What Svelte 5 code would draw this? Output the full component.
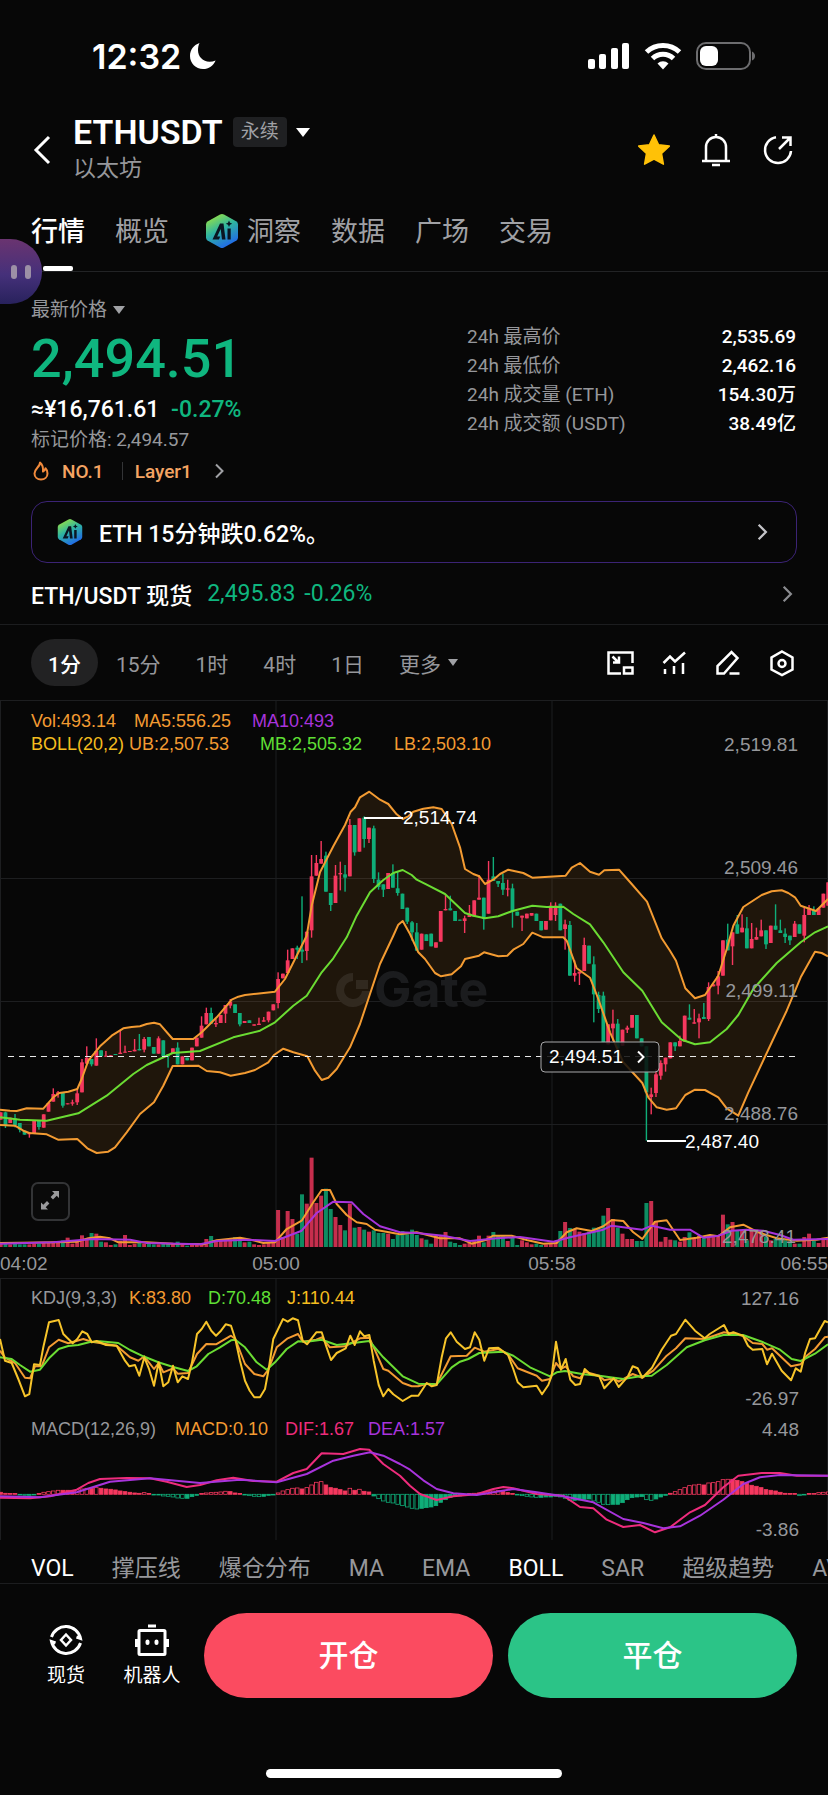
<script lang="ts">
	type Candle = { x: number; up: boolean; top: number; bottom: number; high: number; low: number; vol: number };

	const tabs = ['行情', '概览', '洞察', '数据', '广场', '交易'];
	const frames = ['1分', '15分', '1时', '4时', '1日'];
	const indicators = ['VOL', '撑压线', '爆仓分布', 'MA', 'EMA', 'BOLL', 'SAR', '超级趋势', 'AVL'];
	const stats = [
		['24h 最高价', '2,535.69'],
		['24h 最低价', '2,462.16'],
		['24h 成交量 (ETH)', '154.30万'],
		['24h 成交额 (USDT)', '38.49亿']
	];

	let tab = $state('行情');
	let frame = $state('1分');
	let shown = $state(['VOL', 'BOLL']);

	function toggle(name: string) {
		shown = shown.includes(name) ? shown.filter((n) => n !== name) : [...shown, name];
	}

	// Series are stored in thirds of a chart unit, in two halves
	const HALF = 1230;
	const STEP = 14.35;

	// dir,body top,body bottom,high,low
	const rawCandles = `r,1060,1082 g,1060,1100,1058,1107 r,1076,1092 g,1078,1098,1065,1105 g,1092,1112,,1120 g,1115,1127 r,1120,1126,,1136 r,1084,1122 g,1086,1104,,1112 r,1066,1106
		r,1032,1058 r,1005,1028,988 r,1000,1005,996,1016 g,1002,1040,,1046 r,1033,1036 r,1030,1034,1022,1040 r,1003,1030,988,1038 r,910,1000,900 r,896,914,862 g,900,916,,922
		r,876,920,838 g,874,892 r,890,893,876 r,889,892 g,885,888 r,881,885,815 r,878,881,860 r,876,879 r,872,877,840 g,870,874,825
		r,840,872,834,880 g,834,862 g,864,884 r,838,884,832 g,844,892 g,886,892,,926 r,868,884 g,866,916,850 r,892,916 g,896,904
		r,866,904 r,836,862 r,800,836,772 r,762,796,746 g,762,794,746 r,792,796,780,804 r,768,792 r,738,764,,792 r,728,740,720,748 g,736,762
		g,762,796,,802 r,786,792 g,784,792 r,796,800 r,794,798,776 r,784,788,774 r,758,784,,790 r,736,754 r,660,732,640,748 r,644,658
		r,604,642,572 r,568,600 g,566,572,560,600 g,572,578,412,612 r,518,576,,604 r,352,514,288,536 r,312,350,288 r,300,314,246 g,290,398,278 g,402,438,,456
		r,350,432,318 r,342,346,308,394 g,346,356,318,398 r,198,352,180 g,198,280,,290 r,178,278 g,176,240,172,266 r,206,240,,252 g,208,360,200,372 g,362,384,340,392
		g,376,392,,414 r,342,390 g,342,386,316 g,388,402,336,410 g,404,450 g,446,488,,495 g,490,520,486,545 g,520,575,492 r,524,572 g,526,546
		g,524,562 r,550,566 r,456,548 r,450,454,408 g,448,454,410 g,456,486 g,482,485 r,478,486,470,522 r,464,474,438 r,424,472
		r,416,422,348 g,416,480,,512 r,362,464,306 g,352,366,294 g,366,374,,384 g,372,392,344,408 r,388,392,362,412 g,388,458,374,506 g,458,470 r,470,476,,516
		r,464,478 r,462,470 g,464,486 g,486,514 r,486,512 r,440,484,430 r,440,468,430,486 g,434,514 r,496,510,482,572 g,498,650,486
		r,642,650,604,668 r,638,644,,678 r,558,636,536 g,560,614 g,616,706,592,790 g,708,750,698,762 g,710,850,698 r,796,856 r,794,808,752,846 g,794,868,780
		r,812,860 r,806,812,800,822 r,768,806 g,768,838 g,838,862 g,862,1000,,1145 r,1006,1014,986,1066 r,946,1002,930,1014 r,912,950,904,962 r,896,916,,938
		r,850,898 g,850,862,,876 r,846,862,830 r,770,848 g,776,782,736 r,790,794,750 r,778,790,764,838 g,774,780,732 r,684,780,670,786 r,676,682
		r,652,680,636,706 r,544,650 g,542,574,494 r,520,562,,618 g,496,524,468 r,506,520,466 g,508,568,474 r,540,568,492 r,534,542,506 r,514,532,482
		g,514,556,,570 r,500,552 g,500,512,436 g,514,522,482 g,524,534,508,552 g,530,544,,558 r,494,534,486 g,496,524 r,468,530,442,550 r,448,468,438
		g,454,468,442 r,448,468 r,404,446 r,370,440`;

	const volumes = [
		12, 12, 8, 10, 8, 8, 8, 10, 10, 12, 14, 16, 14, 20, 28, 10, 18, 35, 22, 42, 40, 16, 14, 6, 8, 18, 36, 6, 10, 14,
		10, 10, 8, 8, 10, 10, 12, 16, 6, 4, 8, 12, 10, 24, 33, 16, 18, 18, 22, 30, 24, 14, 16, 8, 6, 8, 14, 18, 111, 30,
		108, 84, 40, 158, 130, 268, 132, 154, 175, 114, 90, 66, 50, 130, 58, 60, 52, 46, 50, 42, 42, 40, 24, 36, 48, 38, 52, 36, 26, 22,
		10, 34, 36, 45, 16, 12, 6, 10, 12, 20, 34, 14, 34, 45, 34, 32, 18, 30, 6, 20, 14, 8, 10, 6, 8, 12, 14, 48, 75, 57,
		54, 46, 42, 46, 58, 58, 94, 117, 84, 58, 40, 24, 24, 18, 18, 132, 138, 78, 16, 30, 22, 20, 16, 30, 44, 28, 34, 30, 34, 34,
		32, 97, 68, 75, 50, 48, 20, 52, 52, 50, 30, 20, 24, 24, 20, 16, 10, 10, 30, 40, 18, 12, 28, 30
	];

	const macdBars = [
		6, 3, 2, 1, -1, -3, -3, -2, 1, 6, 8, 10, 12, 12, 12, 12, 14, 16, 18, 18, 20, 18, 16, 15, 13, 10, 8, 6, 4, 3,
		5, 1, -1, -2, -5, -6, -8, -11, -12, -12, -7, -3, 1, 4, 5, 6, 7, 9, 8, 4, 1, -2, -4, -6, -7, -6, -3, -1, 4, 10,
		14, 18, 19, 16, 20, 28, 36, 38, 28, 20, 18, 14, 10, 18, 12, 15, 9, 7, -5, -13, -20, -24, -26, -30, -34, -38, -42, -44, -42, -40,
		-38, -34, -24, -16, -9, -5, -5, -3, 2, 3, 4, 5, 8, 10, 11, 9, 5, 1, -2, -4, -6, -8, -9, -9, -8, -8, -6, -8, -12, -18,
		-18, -17, -15, -14, -20, -24, -30, -31, -30, -30, -25, -16, -10, -8, -7, -16, -18, -14, -8, -3, 3, 8, 14, 20, 26, 28, 30, 28, 34, 35,
		38, 44, 45, 45, 42, 38, 32, 27, 24, 20, 14, 12, 10, 6, 3, 1, 0, -4, -2, 0, 2, 5, 6, 7
	];

	const candles: Candle[] = rawCandles
		.trim()
		.split(/\s+/)
		.map((row, i) => {
			const [dir, top, bottom, high, low] = row.split(',');
			return {
				x: (2 + STEP * i) / 3,
				up: dir === 'r',
				top: 59 + +top / 3,
				bottom: 59 + +bottom / 3,
				high: 59 + +(high || top) / 3,
				low: 59 + +(low || bottom) / 3,
				vol: volumes[i] / 3
			};
		});

	function pairs(text: string, shift: number, base: number) {
		return text
			.trim()
			.split(/\s+/)
			.map((p) => p.split(',').map(Number))
			.map(([x, y]) => `${((x + shift) / 3).toFixed(1)},${(base + y / 3).toFixed(1)}`);
	}

	function series(left: string, right: string, base: number) {
		return [...pairs(left, 0, base), ...pairs(right, HALF, base)];
	}

	const upper = series(
		'0,1052 30,1055 50,1056 80,1048 130,1049 160,1015 178,1002 205,998 232,990 245,960 265,905 300,862 335,830 370,808 395,804 420,802 440,795 462,791 480,796 518,840 580,840 605,820 650,775 695,722 715,713 735,708 770,704 825,698 855,660 920,530 935,440 960,340 1000,262 1035,198 1052,158 1065,145 1080,115 1108,98 1140,122 1165,135 1190,166 1208,180 1225,172 1240,158',
		'40,149 70,145 95,150 125,195 150,265 165,330 190,345 208,352 225,375 250,362 270,345 295,332 340,342 367,356 467,350 485,326 510,312 540,338 567,347 583,334 627,332 665,375 711,428 755,538 780,575 798,605 826,688 855,718 885,708 925,650 950,570 970,500 1000,444 1055,408 1085,397 1115,394 1135,402 1155,415 1172,440 1218,456 1254,420',
		59
	);
	const lower = series(
		'0,1098 45,1100 70,1115 88,1122 140,1126 174,1142 232,1140 262,1168 290,1182 325,1178 345,1165 380,1120 420,1065 462,1030 490,980 518,921 595,920 620,936 660,940 692,950 735,942 765,933 805,910 822,888 850,869 880,880 922,892 945,935 965,963 985,956 1010,930 1050,865 1080,795 1110,705 1140,615 1180,530 1195,497 1208,486 1230,525',
		'25,580 45,600 75,642 93,652 125,646 153,622 165,600 207,590 222,580 265,592 292,590 310,572 340,555 367,521 400,535 460,535 470,545 500,628 540,656 565,720 600,820 640,910 697,972 715,1015 740,1045 770,1052 798,1048 826,1008 855,992 885,993 925,1015 950,1048 985,1070 1015,1000 1090,840 1130,755 1172,655 1215,578 1235,582 1254,592',
		59
	);
	const middle = series(
		'0,1075 60,1082 140,1085 235,1063 320,1010 400,945 440,918 518,882 600,876 700,835 780,815 825,790 880,740 920,710 965,640 1000,598 1040,535 1070,470 1110,400 1150,363 1180,342 1208,333 1235,348',
		'20,362 50,377 105,405 165,462 190,470 225,478 265,472 310,455 367,440 410,444 460,443 490,465 540,496 580,550 640,640 697,695 755,790 815,842 855,856 900,850 950,810 985,768 1030,690 1100,612 1172,550 1215,520 1254,502',
		59
	);
	const band = [...upper, ...[...lower].reverse()].join(' ');

	const ma5 = series(
		'0,312 170,310 230,308 265,298 300,293 330,298 355,310 440,310 520,314 610,316 650,304 720,296 760,304 790,312 825,310 860,270 905,245 940,190 965,153 990,153 1010,195 1040,228 1070,250 1100,255 1125,272 1200,286',
		'20,280 90,298 150,298 185,314 230,302 250,290 305,290 350,303 400,314 440,312 470,280 500,268 545,276 580,262 605,243 640,246 670,280 697,300 735,248 770,244 810,303 860,296 900,288 925,292 960,265 1000,257 1045,280 1100,298 1160,305 1220,302 1254,296',
		439
	);
	const ma10 = series(
		'0,314 160,310 280,300 390,302 440,312 600,316 650,306 740,302 825,306 905,275 950,222 1000,188 1055,190 1090,225 1140,262 1200,280',
		'20,282 100,290 180,306 260,298 330,294 430,308 480,295 580,272 605,260 697,272 725,260 780,272 840,272 880,296 925,290 965,275 1010,272 1060,275 1110,288 1150,302 1254,300',
		439
	);

	const lineJ = series(
		'0,180 15,245 35,252 55,300 75,352 88,345 102,256 120,258 130,205 147,130 176,123 190,165 218,193 232,180 247,157 262,165 275,190 290,186 318,198 350,200 375,245 388,262 405,258 418,290 433,235 448,272 462,320 476,250 490,322 505,310 519,260 533,310 547,292 564,300 576,250 591,165 605,150 619,128 634,155 648,170 663,155 677,136 693,140 706,180 720,245 735,305 749,335 763,355 780,355 795,330 806,270 820,180 849,120 863,128 878,118 894,124 908,185 921,196 949,160 965,160 978,200 993,243 1010,222 1037,208 1051,170 1064,198 1080,157 1093,172 1108,168 1121,245 1136,318 1150,352 1165,330 1180,346 1208,366 1235,350',
		'5,350 25,350 50,312 65,322 80,318 95,235 108,178 122,160 140,188 165,210 180,205 194,160 208,182 223,245 237,208 265,206 294,228 310,270 323,310 340,325 380,320 396,346 415,318 425,290 438,188 453,272 467,240 481,302 496,318 510,315 524,270 539,284 568,292 583,328 611,298 626,324 654,292 668,262 683,268 697,296 726,266 755,212 783,170 798,165 826,122 855,155 884,178 899,165 942,138 956,165 970,160 999,170 1014,200 1028,212 1057,210 1071,256 1086,224 1115,275 1143,304 1157,268 1172,278 1186,220 1200,180 1215,178 1244,126 1254,130',
		579
	);
	const lineK = series(
		'0,215 15,236 45,252 75,296 90,298 105,262 125,262 147,205 176,182 205,193 250,180 275,188 350,200 390,235 415,245 433,232 462,270 476,252 490,280 519,268 533,284 564,282 591,225 619,195 648,196 693,170 706,180 735,255 763,285 790,292 806,270 830,205 863,178 894,165 908,188 949,182 965,175 990,205 1035,202 1080,178 1108,176 1121,205 1150,270 1165,275 1208,312 1235,322',
		'25,322 50,314 80,316 122,232 170,230 194,206 223,218 265,210 294,226 323,268 380,290 396,305 420,300 438,252 453,270 467,262 490,292 510,298 524,278 568,290 583,304 611,298 626,308 668,285 697,296 730,275 770,230 798,208 826,178 884,180 942,160 999,170 1028,192 1057,195 1071,212 1086,208 1143,262 1172,256 1190,230 1215,210 1244,175 1254,173',
		579
	);
	const lineD = series(
		'0,235 35,240 60,258 90,278 120,272 147,238 176,210 205,201 235,198 270,189 300,187 355,192 390,213 430,232 475,250 520,264 564,276 590,262 625,225 660,205 693,184 706,182 735,205 770,250 800,272 825,250 860,210 894,187 920,188 965,182 1010,198 1060,192 1108,186 1150,235 1208,292',
		'25,314 80,316 125,265 150,248 175,240 208,222 280,218 310,230 360,265 420,292 440,280 465,276 520,286 568,290 640,300 690,292 725,290 770,258 830,205 884,184 940,168 999,168 1060,190 1110,212 1145,240 1172,246 1215,224 1254,196',
		579
	);
	const dif = series(
		'0,656 90,658 150,652 230,632 265,612 300,600 380,597 450,598 500,608 560,624 600,618 650,604 700,596 760,606 830,608 880,582 920,570 965,523 1030,525 1080,510 1108,512 1150,555 1200,590 1230,620',
		'30,645 80,663 130,652 200,646 250,630 280,624 310,628 380,645 460,650 510,684 550,688 590,722 640,744 690,738 735,760 780,745 840,700 885,678 940,625 985,590 1055,582 1110,582 1160,590 1254,590',
		579
	);
	const dea = series(
		'0,652 120,655 230,640 330,608 450,598 600,612 720,602 830,610 920,585 1000,545 1060,530 1110,520 1150,530 1200,555',
		'0,572 40,604 80,630 130,643 200,648 310,630 380,640 460,652 550,670 640,720 700,732 760,748 810,742 870,710 940,662 1000,615 1050,595 1110,588 1254,590',
		579
	);
</script>

{#snippet aiLogo(size: number)}
	<svg class="ai" width={size} height={size} viewBox="0 0 34 34" aria-hidden="true">
		<defs>
			<linearGradient id="ai-fill" x1="0.2" y1="0" x2="0.7" y2="1">
				<stop offset="0" stop-color="#9be341" />
				<stop offset="0.45" stop-color="#2fb5a0" />
				<stop offset="1" stop-color="#1f62f0" />
			</linearGradient>
		</defs>
		<path d="M15 0.6q2-1 4 0l12.500 7q1.500 1 1.500 3v13q0 2-1.500 3l-12.500 7q-2 1-4 0l-12.500-7q-1.500-1-1.500-3v-13q0-2 1.500-3z" fill="url(#ai-fill)" />
		<path d="M7.500 25.500 15 9.500h3.500l2 16h-3.500l-1.300-10.500-3.500 7.500h3l-1.200 3z" fill="#0a1522" />
		<path d="M22.500 14.500h3.200v11h-3.200zM24 6.500l1 2.200 2.200 1-2.200 1-1 2.200-1-2.200-2.200-1 2.200-1z" fill="#0a1522" />
	</svg>
{/snippet}

{#snippet chevron(size: number, color: string, weight: number)}
	<svg width={size} height={size} viewBox="0 0 18 18" fill="none" stroke={color} stroke-width={weight} aria-hidden="true">
		<path d="M6 2.500 12.500 9 6 15.500" />
	</svg>
{/snippet}

<div class="screen">
	<div class="status">
		<div class="clock">
			<span>12:32</span>
			<svg width="28" height="28" viewBox="0 0 28 28" aria-hidden="true">
				<path d="M10.500 1C4.500 3 1 8 1 14c0 7.200 5.800 13 13 13 5.600 0 10.600-3.400 12.600-8.600-2 .9-4 1.300-6.100 1.300C14 19.700 9 14.700 9 8.300c0-2.600.4-5 1.500-7.300z" fill="#fff" />
			</svg>
		</div>
		<svg width="170" height="32" viewBox="0 0 170 32" aria-hidden="true">
			<g fill="#fff">
				<rect x="2" y="19" width="7" height="10" rx="2" />
				<rect x="13" y="14" width="7" height="15" rx="2" />
				<rect x="25" y="8" width="7" height="21" rx="2" />
				<rect x="36" y="3" width="7" height="26" rx="2" />
			</g>
			<g fill="none" stroke="#fff" stroke-width="5">
				<path d="M60.500 12a24 24 0 0 1 33 0" />
				<path d="M66.500 18.500a15 15 0 0 1 21 0" />
			</g>
			<path d="M77 29.500l-5.500-6a8 8 0 0 1 11 0z" fill="#fff" />
			<rect x="111" y="3" width="53" height="26" rx="9" fill="none" stroke="#6d6d6f" stroke-width="2" />
			<rect x="114" y="6" width="18" height="20" rx="6" fill="#fff" />
			<path d="M166 11.500q3 1.500 3 4.500t-3 4.500z" fill="#6d6d6f" />
		</svg>
	</div>

	<header>
		<button class="back" aria-label="返回">
			<svg width="20" height="32" viewBox="0 0 20 32" fill="none" stroke="#fff" stroke-width="3" aria-hidden="true">
				<path d="M17 3 4 16l13 13" />
			</svg>
		</button>
		<div class="pair">
			<h1>
				ETHUSDT
				<span class="badge">永续</span>
				<i class="caret"></i>
			</h1>
			<p>以太坊</p>
		</div>
		<div class="actions">
			<button aria-label="收藏">
				<svg width="34" height="34" viewBox="0 0 34 34" aria-hidden="true">
					<path d="M17 2l4.600 9.700 10.700 1.400-7.800 7.400 1.900 10.700L17 26l-9.400 5.200 1.900-10.700-7.800-7.400 10.700-1.400z" fill="#ffc107" stroke="#ffc107" stroke-width="1.500" stroke-linejoin="round" />
				</svg>
			</button>
			<button aria-label="提醒">
				<svg width="34" height="34" viewBox="0 0 34 34" fill="none" stroke="#fff" stroke-width="2.500" aria-hidden="true">
					<path d="M17 1v3M7 28V14a10 10 0 0 1 20 0v14M3 28h28M13 32h8" />
				</svg>
			</button>
			<button aria-label="分享">
				<svg width="34" height="34" viewBox="0 0 34 34" fill="none" stroke="#fff" stroke-width="2.500" aria-hidden="true">
					<path d="M15 4.200A13 13 0 1 0 30 18" />
					<path d="M18 16 29 5M21 4.500h8.500V13" />
				</svg>
			</button>
		</div>
	</header>

	<nav class="tabs">
		{#each tabs as name}
			<button class:active={tab === name} class:with-logo={name === '洞察'} onclick={() => (tab = name)}>
				{#if name === '洞察'}{@render aiLogo(34)}{/if}
				{name}
			</button>
		{/each}
	</nav>

	<button class="bubble" aria-label="悬浮窗"><i></i><i></i></button>

	<section class="quote">
		<div>
			<button class="price-kind">最新价格 <i class="caret small"></i></button>
			<div class="price">2,494.51</div>
			<div class="fiat">≈¥16,761.61 <span class="down">-0.27%</span></div>
			<div class="mark">标记价格: 2,494.57</div>
			<div class="tags">
				<svg width="20" height="20" viewBox="0 0 18 20" fill="none" stroke="#f08a3c" stroke-width="2" stroke-linejoin="round" aria-hidden="true">
					<path d="M8 1.500c.5 4-5.500 6-5.500 11C2.500 16 5.300 18.500 9 18.500s6.500-2.500 6.500-6c0-2-.8-4-2-5.200-.5 1.700-1.300 2.700-2.500 3.200C11.300 6.500 10.500 3.500 8 1.500z" />
				</svg>
				<a href="#rank">NO.1</a>
				<i class="divider"></i>
				<a class="layer" href="#layer1">Layer1 {@render chevron(18, '#a0a1a5', 2)}</a>
			</div>
		</div>
		<table>
			<tbody>
				{#each stats as [label, value]}
					<tr>
						<th scope="row">{label}</th>
						<td>{value}</td>
					</tr>
				{/each}
			</tbody>
		</table>
	</section>

	<a class="insight" href="#insight">
		{@render aiLogo(26)}
		<span>ETH 15分钟跌0.62%。</span>
		{@render chevron(20, '#c4c4c8', 2)}
	</a>

	<a class="spot" href="#spot">
		<b>ETH/USDT 现货</b>
		<span>2,495.83</span>
		<span>-0.26%</span>
		{@render chevron(20, '#8b8c90', 2)}
	</a>

	<div class="toolbar">
		<div class="frames">
			{#each frames as name}
				<button class:active={frame === name} onclick={() => (frame = name)}>{name}</button>
			{/each}
			<button>更多 <i class="caret tiny"></i></button>
		</div>
		<div class="tools">
			<button aria-label="小窗">
				<svg width="28" height="28" viewBox="0 0 28 28" aria-hidden="true">
					<path d="M15 24.500H2.500v-21h24V14M6.500 7.500l6 6M13 7.500v6H7M18 18.500h8.500v6H18z" />
				</svg>
			</button>
			<button aria-label="指标">
				<svg width="28" height="28" viewBox="0 0 28 28" aria-hidden="true">
					<path d="M3.500 14 10 7.500l5 5 10-9M5 20v5M14 17v8M23 14v11" />
				</svg>
			</button>
			<button aria-label="画线">
				<svg width="28" height="28" viewBox="0 0 28 28" aria-hidden="true">
					<path d="M3.500 24.500v-7.500L17.500 3l6 6L10 24.500zM15.500 24.500h10" />
				</svg>
			</button>
			<button aria-label="设置">
				<svg width="28" height="28" viewBox="0 0 28 28" aria-hidden="true">
					<path d="M14 2.500 24.500 8.500v12L14 26 3.500 20.500v-12z" />
					<circle cx="14" cy="14.500" r="3.500" />
				</svg>
			</button>
		</div>
	</div>

	<svg class="chart" viewBox="0 0 828 840" role="img" aria-label="ETHUSDT K线图">
		<g class="grid">
			<path d="M0 0.500H828M0 178.500H828M0 301.500H828M0 424.500H828M0 578.500H828" />
			<path d="M0.500 0V547M276 0V547M552 0V547M827.500 0V547M0.500 579V840M276 579V840M552 579V840M827.500 579V840" />
		</g>

		<g class="watermark">
			<path d="M353 273a17 17 0 1 0 17 18h-8a9 9 0 1 1-9-10z" />
			<path d="M356 280h12v9h-12z" />
			<text x="374" y="307">Gate</text>
		</g>

		<polygon class="band" points={band} />
		{#each candles as c}
			<g fill={c.up ? '#f6385f' : '#0fae79'}>
				<rect x={c.x - 0.7} y={c.high} width="1.400" height={c.low - c.high} />
				<rect x={c.x - 1.9} y={c.top} width="3.800" height={c.bottom - c.top} />
				<rect x={c.x - 2} y={547 - c.vol} width="4" height={c.vol} opacity="0.800" />
			</g>
		{/each}
		<polyline class="orange" points={upper.join(' ')} />
		<polyline class="orange" points={lower.join(' ')} />
		<polyline class="lime" points={middle.join(' ')} />
		<polyline class="orange" points={ma5.join(' ')} />
		<polyline class="purple" points={ma10.join(' ')} />

		<path class="last" d="M8 356.500H796" />
		<rect class="last-box" x="541" y="342" width="118" height="30" rx="4" />
		<text class="white" x="549" y="363">2,494.51</text>
		<path d="M638 351.500 643.500 357 638 362.500" fill="none" stroke="#fff" stroke-width="2" />

		<path class="callout" d="M364 118H403M647 441H686" />
		<text class="strong" x="403" y="124">2,514.74</text>
		<text class="strong" x="685" y="448">2,487.40</text>

		<g class="axis">
			<text x="798" y="51">2,519.81</text>
			<text x="798" y="174">2,509.46</text>
			<text x="798" y="297">2,499.11</text>
			<text x="798" y="420">2,488.76</text>
			<text x="796" y="543">2,478.41</text>
			<text x="799" y="605">127.16</text>
			<text x="799" y="705">-26.97</text>
			<text x="799" y="736">4.48</text>
			<text x="799" y="836">-3.86</text>
		</g>
		<g class="time">
			<text x="0" y="570">04:02</text>
			<text x="276" y="570" text-anchor="middle">05:00</text>
			<text x="552" y="570" text-anchor="middle">05:58</text>
			<text x="828" y="570" text-anchor="end">06:55</text>
		</g>

		<g class="legend">
			<text x="31" y="27" fill="#f39b32">Vol:493.14</text>
			<text x="134" y="27" fill="#f39b32">MA5:556.25</text>
			<text x="252" y="27" fill="#a834dc">MA10:493</text>
			<text x="31" y="50" fill="#f5bd1f">BOLL(20,2)</text>
			<text x="129" y="50" fill="#f39b32">UB:2,507.53</text>
			<text x="260" y="50" fill="#5fdf35">MB:2,505.32</text>
			<text x="394" y="50" fill="#f39b32">LB:2,503.10</text>
			<text x="31" y="604" fill="#96979b">KDJ(9,3,3)</text>
			<text x="129" y="604" fill="#f39b32">K:83.80</text>
			<text x="208" y="604" fill="#5fdf35">D:70.48</text>
			<text x="287" y="604" fill="#f5bd1f">J:110.44</text>
			<text x="31" y="735" fill="#96979b">MACD(12,26,9)</text>
			<text x="175" y="735" fill="#f39b32">MACD:0.10</text>
			<text x="285" y="735" fill="#ee2c7c">DIF:1.67</text>
			<text x="368" y="735" fill="#a834dc">DEA:1.57</text>
		</g>

		<polyline class="orange" points={lineK.join(' ')} />
		<polyline class="lime" points={lineD.join(' ')} />
		<polyline class="yellow" points={lineJ.join(' ')} />

		{#each macdBars as v, i}
			{@const h = Math.max(Math.abs(v) / 3, 0.7)}
			{@const color = v >= 0 ? '#f6385f' : '#0fae79'}
			{@const hollow = i > 0 && Math.abs(v) > Math.abs(macdBars[i - 1])}
			<rect
				x={(2 + STEP * i) / 3 - 1.8}
				y={v >= 0 ? 794.3 - h : 794.3}
				width="3.600"
				height={h}
				fill={hollow ? '#070707' : color}
				stroke={color}
				stroke-width="0.800"
			/>
		{/each}
		<polyline class="pink" points={dif.join(' ')} />
		<polyline class="purple" points={dea.join(' ')} />

		<g class="expand">
			<rect x="32" y="483" width="37" height="37" rx="6" />
			<path d="M52 491h7v7l-2.300-2.300-3.700 3.700-2.400-2.400 3.700-3.700zM41 502.500l2.300 2.300 3.700-3.700 2.400 2.400-3.700 3.700 2.300 2.300h-7z" />
		</g>
	</svg>

	<div class="indicators">
		{#each indicators as name}
			<button class:active={shown.includes(name)} onclick={() => toggle(name)}>{name}</button>
		{/each}
	</div>

	<footer>
		<button class="shortcut">
			<svg width="36" height="36" viewBox="0 0 36 36" fill="none" stroke="#fff" stroke-width="3" aria-hidden="true">
				<path d="M3.500 15A15 15 0 0 1 32.500 16.500l-4-1.500M32.500 21A15 15 0 0 1 3.500 19.500l4 1.500" />
				<path d="M18 12.500l5 5.500-5 5.500-5-5.500z" stroke-width="2.500" />
			</svg>
			现货
		</button>
		<button class="shortcut">
			<svg width="36" height="36" viewBox="0 0 36 36" fill="none" stroke="#fff" stroke-width="3" aria-hidden="true">
				<path d="M14 4h8" />
				<rect x="5" y="8.500" width="26" height="24" rx="1" />
				<path d="M2.500 17v8M33.500 17v8" />
				<path d="M13.500 19.500v1.500M22.500 19.500v1.500" stroke-width="4" stroke-linecap="round" />
			</svg>
			机器人
		</button>
		<div class="orders">
			<button class="open">开仓</button>
			<button class="close">平仓</button>
		</div>
	</footer>
	<div class="home"></div>
</div>

<style>
	:global(body) {
		background: #070707;
	}

	.screen {
		position: relative;
		overflow: hidden;
		background: #070707;
		color: #fff;
		font-family: Roboto, 'Noto Sans CJK SC', sans-serif;
		font-size: 23px;
	}

	button {
		padding: 0;
		border: 0;
		background: none;
		color: inherit;
		font: inherit;
		cursor: pointer;
	}

	a {
		color: inherit;
		text-decoration: none;
	}

	svg {
		display: block;
		flex-shrink: 0;
	}

	.status {
		display: flex;
		justify-content: space-between;
		align-items: center;
		height: 40px;
		padding: 36px 72px 0 92px;
	}

	.clock {
		display: flex;
		align-items: center;
		gap: 8px;
		font-family: Inter, sans-serif;
		font-size: 34px;
		font-weight: 600;
	}

	header {
		display: flex;
		align-items: center;
		padding: 37px 33px 0 32px;
	}

	.back {
		margin-right: 21px;
	}

	.pair {
		flex: 1;
	}

	h1 {
		display: flex;
		align-items: center;
		margin: 0;
		font-size: 34px;
		font-weight: 600;
		line-height: 38px;
	}

	.badge {
		margin: 0 9px 0 10px;
		padding: 0 8px;
		border-radius: 4px;
		background: #1f2022;
		color: #a0a1a5;
		font-size: 19px;
		font-weight: 400;
		line-height: 30px;
	}

	.pair p {
		margin: 0;
		color: #96979b;
		line-height: 36px;
	}

	.caret {
		display: inline-block;
		border: 7px solid transparent;
		border-top: 9px solid #fff;
		border-bottom: 0;
	}

	.caret.small {
		border-width: 8px 6px 0;
		border-top-color: #a0a1a5;
	}

	.caret.tiny {
		border-width: 7px 5px 0;
		border-top-color: #a0a1a5;
	}

	.actions {
		display: flex;
		gap: 28px;
	}

	.tabs {
		display: flex;
		gap: 30px;
		padding: 25px 31px 0;
		border-bottom: 1px solid #222325;
		color: #a0a1a5;
		font-size: 27px;
	}

	.tabs button {
		display: flex;
		flex-direction: column;
		align-items: center;
		height: 59px;
		line-height: 40px;
		white-space: nowrap;
	}

	.tabs .with-logo {
		flex-direction: row;
		align-items: flex-start;
		gap: 8px;
		margin-left: 6px;
	}

	.with-logo .ai {
		margin-top: 2px;
	}

	.tabs .active {
		color: #fff;
		font-weight: 500;
	}

	.tabs .active::after {
		content: '';
		width: 30px;
		height: 5px;
		margin-top: 14px;
		border-radius: 2px;
		background: #fff;
	}

	.bubble {
		position: absolute;
		top: 239px;
		left: 0;
		display: flex;
		justify-content: center;
		align-items: center;
		gap: 8px;
		width: 42px;
		height: 65px;
		border-radius: 0 32px 32px 0;
		background: linear-gradient(#6a3470, #45307a 55%, #28225c);
	}

	.bubble i {
		width: 6px;
		height: 14px;
		border-radius: 3px;
		background: #9c90a6;
	}

	.quote {
		display: flex;
		justify-content: space-between;
		align-items: flex-start;
		padding: 25px 32px 14px 31px;
	}

	.price-kind {
		display: flex;
		align-items: center;
		gap: 6px;
		color: #96979b;
		font-size: 19px;
		line-height: 26px;
	}

	.price {
		color: #0fb67f;
		font-size: 54px;
		font-weight: 500;
		line-height: 72px;
	}

	.fiat {
		font-weight: 500;
		line-height: 30px;
	}

	.down {
		margin-left: 6px;
		color: #0fb67f;
	}

	.mark {
		color: #96979b;
		font-size: 19px;
		line-height: 30px;
	}

	.tags {
		display: flex;
		align-items: center;
		height: 32px;
		color: #f5a463;
		font-size: 19px;
		font-weight: 500;
	}

	.tags > svg {
		margin-right: 11px;
	}

	.divider {
		width: 1px;
		height: 18px;
		margin: 0 12px 0 18px;
		background: #333436;
	}

	.layer {
		display: flex;
		align-items: center;
		gap: 18px;
	}

	table {
		width: 43%;
		margin-top: 25px;
		border-collapse: collapse;
		font-size: 19px;
	}

	th,
	td {
		height: 29px;
		padding: 0;
		line-height: 29px;
	}

	th {
		color: #96979b;
		font-weight: 400;
		text-align: left;
	}

	td {
		font-weight: 500;
		text-align: right;
	}

	.insight {
		display: flex;
		align-items: center;
		gap: 16px;
		height: 60px;
		margin: 0 31px;
		padding: 0 24px 0 25px;
		border: 1px solid #3b2375;
		border-radius: 16px;
		font-weight: 500;
	}

	.insight span {
		flex: 1;
	}

	.spot {
		display: flex;
		align-items: center;
		height: 61px;
		padding: 0 31px;
		border-bottom: 1px solid #1c1d1f;
		color: #0fb67f;
	}

	.spot b {
		margin-right: 6px;
		color: #fff;
		font-weight: 500;
	}

	.spot span {
		margin-left: 9px;
	}

	.spot svg {
		margin-left: auto;
	}

	.toolbar {
		display: flex;
		justify-content: space-between;
		align-items: center;
		padding: 14px 32px 14px 31px;
	}

	.frames,
	.tools {
		display: flex;
		align-items: center;
	}

	.frames {
		gap: 1px;
	}

	.frames button {
		display: flex;
		align-items: center;
		gap: 7px;
		height: 47px;
		padding: 0 17px;
		border-radius: 24px;
		color: #96979b;
		font-size: 21px;
	}

	.frames .active {
		background: #222223;
		color: #fff;
		font-weight: 500;
	}

	.tools {
		gap: 26px;
	}

	.tools svg {
		fill: none;
		stroke: #fff;
		stroke-width: 2.5;
	}

	.chart {
		width: 100%;
		font-family: 'Liberation Sans', sans-serif;
		font-size: 18px;
	}

	.chart polyline {
		fill: none;
		stroke-width: 2;
		stroke-linejoin: round;
	}

	.orange {
		stroke: #f39b32;
	}

	.lime {
		stroke: #6bdc33;
	}

	.purple {
		stroke: #a834dc;
	}

	.yellow {
		stroke: #f7c42a;
	}

	.pink {
		stroke: #ee2c7c;
	}

	.grid path {
		fill: none;
		stroke: #1d1e20;
		stroke-width: 1;
	}

	.watermark {
		fill: #1b1c1e;
		font-family: Inter, sans-serif;
		font-size: 50px;
		font-weight: 700;
	}

	.band {
		fill: #f39b32;
		fill-opacity: 0.1;
	}

	.last {
		stroke: #e8e8e8;
		stroke-width: 1;
		stroke-dasharray: 6 5;
	}

	.last-box {
		fill: #0a0a0a;
		fill-opacity: 0.85;
		stroke: #a8a8aa;
		stroke-width: 1;
	}

	.white,
	.strong {
		fill: #fff;
		font-size: 19px;
	}

	.callout {
		stroke: #fff;
		stroke-width: 2;
	}

	.axis,
	.time {
		fill: #96979b;
		font-size: 19px;
	}

	.axis {
		text-anchor: end;
	}

	.expand rect {
		fill: #0a0a0a;
		stroke: #333436;
		stroke-width: 2;
	}

	.expand path {
		fill: #9a9a9c;
	}

	.indicators {
		display: flex;
		gap: 38px;
		overflow: hidden;
		padding: 15px 0 0 31px;
		border-bottom: 1px solid #1c1d1f;
		color: #96979b;
		line-height: 28px;
	}

	.indicators button {
		flex-shrink: 0;
	}

	.indicators .active {
		color: #fff;
	}

	footer {
		display: flex;
		align-items: center;
		gap: 18px;
		padding: 29px 31px 0 32px;
	}

	.shortcut {
		display: flex;
		flex-direction: column;
		align-items: center;
		gap: 4px;
		width: 68px;
		font-size: 19px;
		line-height: 28px;
		white-space: nowrap;
	}

	.orders {
		display: flex;
		flex: 1;
		gap: 15px;
	}

	.orders button {
		flex: 1;
		height: 85px;
		padding-bottom: 5px;
		border-radius: 43px;
		font-size: 30px;
		font-weight: 500;
	}

	.open {
		background: #fb4b60;
	}

	.close {
		background: #2bc487;
	}

	.home {
		width: 296px;
		height: 9px;
		margin: 71px auto 16px;
		border-radius: 5px;
		background: #fff;
	}
</style>
